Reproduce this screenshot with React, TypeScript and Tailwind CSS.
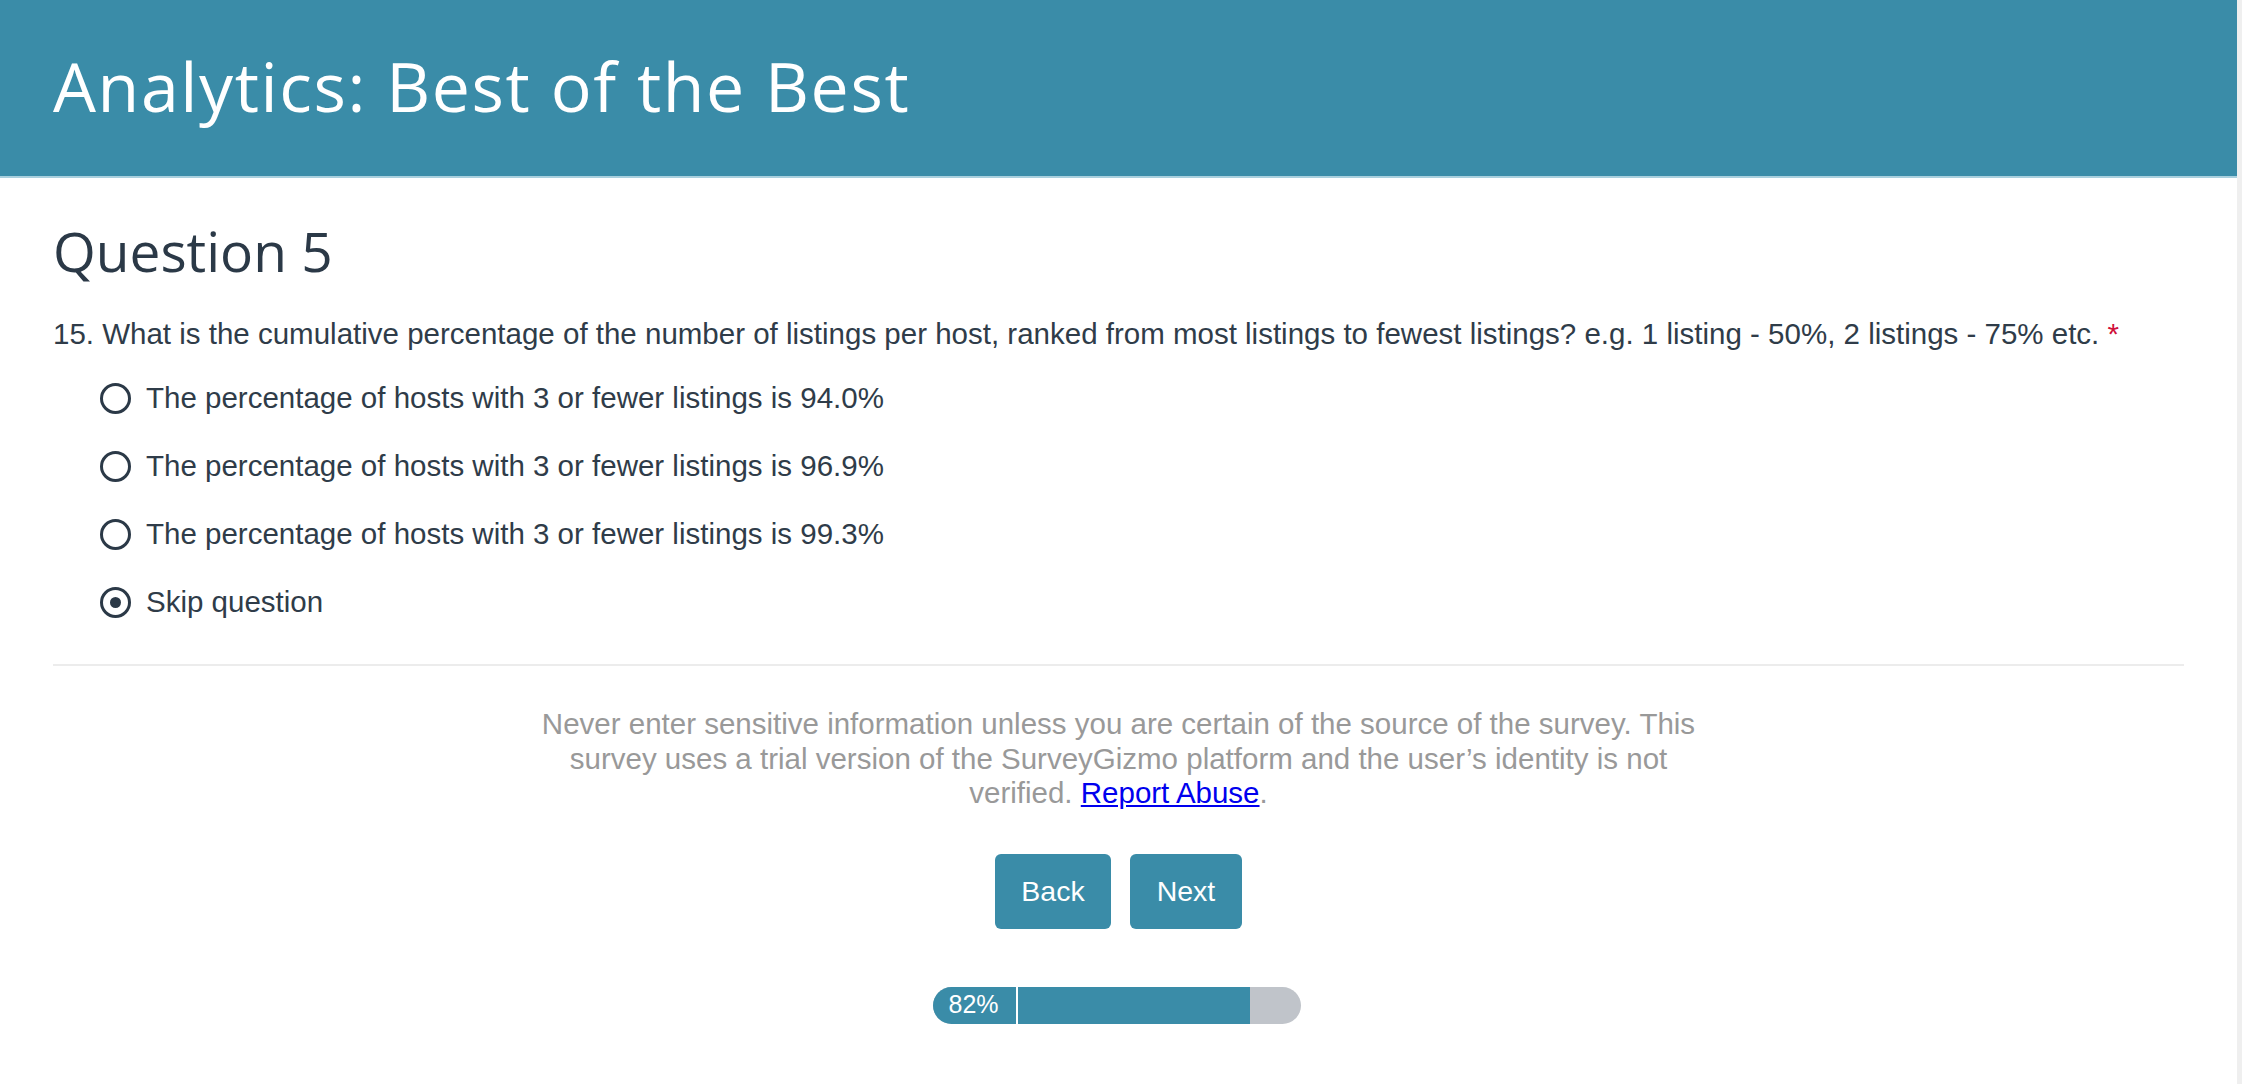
import React from "react";

const options = [
  "The percentage of hosts with 3 or fewer listings is 94.0%",
  "The percentage of hosts with 3 or fewer listings is 96.9%",
  "The percentage of hosts with 3 or fewer listings is 99.3%",
  "Skip question",
];

function Radio({ checked }: { checked: boolean }) {
  return (
    <span className="flex h-[31px] w-[31px] shrink-0 items-center justify-center rounded-full border-[3px] border-[#2b3947] bg-white">
      {checked && <span className="h-[11px] w-[11px] rounded-full bg-[#2b3947]" />}
    </span>
  );
}

export default function App() {
  const arial = { fontFamily: '"Liberation Sans", Arial, sans-serif' };
  const heading = { fontFamily: '"Open Sans", "Noto Sans", sans-serif' };
  return (
    <div className="flex h-[1084px] w-full overflow-hidden bg-white">
      <div className="flex min-w-0 flex-1 flex-col">
        <header className="flex h-[178px] items-center border-b-2 border-[#a9d0de] bg-[#3a8ca8] pl-[53px]">
          <h1 style={heading} className="mt-[-4px] text-[68px] font-normal leading-none tracking-[1.6px] text-white">
            Analytics: Best of the Best
          </h1>
        </header>
        <main className="flex flex-col px-[53px]" style={arial}>
          <h2 style={heading} className="mt-[43px] h-[60px] text-[55px] font-normal leading-[60px] text-[#2b3947]">
            Question 5
          </h2>
          <p className="mt-[33px] h-[40px] whitespace-nowrap text-[29.5px] leading-[40px] text-[#2f3c49]">
            15. What is the cumulative percentage of the number of listings per host, ranked from most listings to fewest listings? e.g. 1 listing - 50%, 2 listings - 75% etc.{" "}
            <span className="text-[#d0103a]">*</span>
          </p>
          <div className="mt-[10px] flex flex-col pl-[47px]">
            {options.map((o, i) => (
              <label key={o} className="flex h-[68px] items-center gap-[15px] text-[29.5px] text-[#2f3c49]">
                <Radio checked={i === 3} />
                <span>{o}</span>
              </label>
            ))}
          </div>
          <div className="mt-[28px] border-t-2 border-[#ececec]" />
          <p className="mx-auto mt-[41px] max-w-[1180px] text-center text-[29.5px] leading-[34.5px] text-[#999999]">
            Never enter sensitive information unless you are certain of the source of the survey. This survey uses a trial version of the SurveyGizmo platform and the user’s identity is not verified.{" "}
            <a href="#" className="text-[#0000ee] underline">Report Abuse</a>.
          </p>
          <div className="mt-[43px] flex justify-center gap-[19px]">
            <button className="h-[75px] w-[116px] rounded-[6px] bg-[#3a8ca8] text-[28.5px] text-white">Back</button>
            <button className="h-[75px] w-[112px] rounded-[6px] bg-[#3a8ca8] text-[28.5px] text-white">Next</button>
          </div>
          <div className="mt-[58px] flex justify-center pr-[4px]">
            <div className="flex h-[37px] w-[368px] overflow-hidden rounded-full bg-[#c0c4ca]">
              <div className="flex w-[83px] items-center bg-[#3a8ca8] pl-[16px] text-[25px] text-white">82%</div>
              <div className="w-[2px] bg-white" />
              <div className="h-full bg-[#3a8ca8]" style={{ width: `${0.82 * 283}px` }} />
            </div>
          </div>
        </main>
      </div>
      <div className="w-[5px] shrink-0 bg-[#efefef]" />
    </div>
  );
}
